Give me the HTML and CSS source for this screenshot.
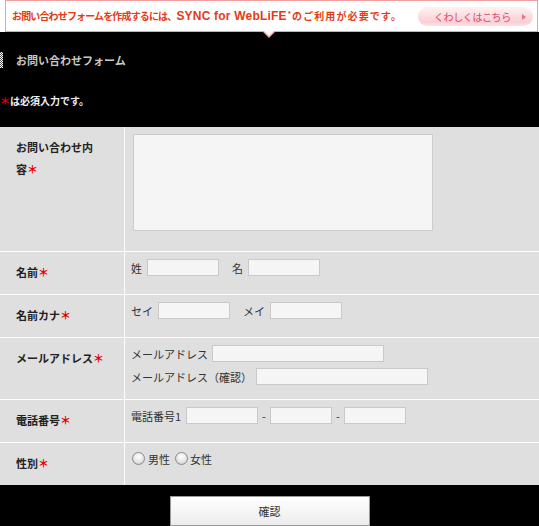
FILE: index.html
```html
<!DOCTYPE html>
<html lang="ja">
<head>
<meta charset="utf-8">
<title>お問い合わせフォーム</title>
<link rel="stylesheet" href="styles.css">
</head>
<body>
<div class="notice">
  <div class="notice-box">
    <p class="notice-text"><span class="nt-lead">お問い合わせフォームを作成するには、</span><strong class="nt-brand">SYNC for WebLiFE<sup>*</sup></strong><span class="nt-tail">のご利用が必要です。</span></p>
    <a class="notice-link" href="#">くわしくはこちら<span class="arrow"></span></a>
  </div>
</div>
<main class="form-area">
  <h1 class="form-title"><span class="mark"></span>お問い合わせフォーム</h1>
  <p class="req-note"><span class="req">＊</span>は必須入力です。</p>
  <form class="contact-form">
    <div class="form-table">
      <div class="label">お問い合わせ内<span class="nw">容<span class="req">＊</span></span></div>
      <div class="field"><textarea class="ta"></textarea></div>

      <div class="label">名前<span class="req">＊</span></div>
      <div class="field">
        <div class="line">姓<input class="text" type="text"><span class="sp">名</span><input class="text" type="text"></div>
      </div>

      <div class="label">名前カナ<span class="req">＊</span></div>
      <div class="field">
        <div class="line">セイ<input class="text" type="text"><span class="sp">メイ</span><input class="text" type="text"></div>
      </div>

      <div class="label">メールアドレス<span class="req">＊</span></div>
      <div class="field">
        <div class="line">メールアドレス<input class="text w172" type="text"></div>
        <div class="line">メールアドレス（確認）<input class="text w172" type="text"></div>
      </div>

      <div class="label">電話番号<span class="req">＊</span></div>
      <div class="field">
        <div class="line">電話番号1<input class="text" type="text"><span class="dash">-</span><input class="text w62 tight" type="text"><span class="dash">-</span><input class="text w62 tight" type="text"></div>
      </div>

      <div class="label">性別<span class="req">＊</span></div>
      <div class="field">
        <div class="line"><input class="radio" type="radio" name="sex">男性<input class="radio r2" type="radio" name="sex">女性</div>
      </div>
    </div>
    <div class="actions"><button class="confirm" type="button">確認</button></div>
  </form>
</main>
</body>
</html>
```

FILE: styles.css
```css
* {
  box-sizing: border-box;
}

html,
body {
  margin: 0;
  padding: 0;
}

body {
  width: 539px;
  height: 526px;
  overflow: hidden;
  background: #000;
  font-family: "Noto Sans CJK JP", "Liberation Sans", sans-serif;
}

/* top notice strip */
.notice {
  height: 32px;
  padding: 0 1px 0 5px;
  background: #fff;
}

.notice-box {
  position: relative;
  height: 32px;
  border: 1px solid #f2a0a0;
  display: flex;
  align-items: center;
  justify-content: space-between;
  padding: 0 4px 0 6px;
}

/* speech-bubble pointer under the strip */
.notice-box::before,
.notice-box::after {
  content: "";
  position: absolute;
  border-style: solid;
  border-color: transparent;
}

.notice-box::before {
  left: 256px;
  top: 30px;
  border-width: 7px 7px 0;
  border-top-color: #f2a0a0;
}

.notice-box::after {
  left: 257px;
  top: 29px;
  border-width: 6px 6px 0;
  border-top-color: #fff;
}

.notice-text {
  margin: 0;
  white-space: nowrap;
  color: #e53a16;
  font-size: 10px;
  font-weight: bold;
  line-height: 14px;
}

.nt-lead {
  letter-spacing: -0.85px;
}

.nt-brand {
  font-family: "Liberation Sans", Arial, sans-serif;
  font-size: 12px;
  letter-spacing: 0.2px;
}

.nt-brand sup {
  font-size: 8px;
  vertical-align: 4px;
  line-height: 0;
  margin-left: 1px;
}

.nt-tail {
  margin-left: 1px;
  letter-spacing: 1.1px;
}

.notice-link {
  display: flex;
  align-items: center;
  width: 115px;
  height: 19px;
  margin-top: 1px;
  padding-left: 16px;
  border-radius: 10px;
  background: linear-gradient(#fff2f3 0%, #fde0e3 40%, #fbcfd4 80%, #fde2e5 100%);
  color: #e2456a;
  font-size: 10px;
  letter-spacing: -0.4px;
  text-decoration: none;
}

.notice-link .arrow {
  margin-left: auto;
  margin-right: 7px;
  border-left: 4px solid #e8738a;
  border-top: 3.5px solid transparent;
  border-bottom: 3.5px solid transparent;
}

/* black form area */
.form-title {
  display: flex;
  align-items: center;
  height: 16px;
  margin: 20px 0 0;
  color: #c8c8c8;
  font-size: 11px;
  font-weight: bold;
  line-height: 16px;
}

.mark {
  width: 3px;
  height: 16px;
  margin-right: 13px;
  background: repeating-conic-gradient(#fff 0 25%, #4a4a4a 0 50%) 0 0 / 2px 2px;
}

.req-note {
  height: 16px;
  margin: 25px 0 0;
  color: #f0f0f0;
  font-size: 10px;
  font-weight: bold;
  line-height: 16px;
}

.req {
  color: #e60000;
}

.form-table {
  display: grid;
  grid-template-columns: 124px 1fr;
  gap: 1px;
  margin-top: 18px;
  background: #fff;
}

.label {
  padding: 9px 16px 11px 16px;
  background: #dfdfdf;
  color: #222;
  font-size: 11px;
  font-weight: bold;
  line-height: 22px;
}

.nw {
  white-space: nowrap;
}

.field {
  display: flex;
  flex-direction: column;
  gap: 6px;
  padding: 7px 8px 14px 6px;
  background: #dfdfdf;
  color: #333;
  font-size: 11px;
}

.line {
  display: flex;
  align-items: center;
  height: 17px;
  white-space: nowrap;
}

.text {
  width: 72px;
  height: 17px;
  margin: 0 0 0 5px;
  padding: 0;
  border: 1px solid #c9c9c9;
  background: #f5f5f5;
}

.text.tight {
  margin-left: 0;
}

.w62 {
  width: 62px;
}

.w172 {
  width: 172px;
  margin-left: 4px;
}

.sp {
  margin-left: 13px;
}

.dash {
  margin: 0 4px;
}

.ta {
  display: block;
  width: 300px;
  height: 97px;
  margin: 0 0 6px 2px;
  border: 1px solid #ccc;
  background: #f5f5f5;
  resize: none;
}

.radio {
  appearance: none;
  -webkit-appearance: none;
  width: 13px;
  height: 13px;
  margin: 0 3px 0 1px;
  border: 1px solid #8a8a8a;
  border-radius: 50%;
  background: radial-gradient(circle at 50% 35%, #fff 0%, #e6e6e6 55%, #b9b9b9 100%);
}

.radio.r2 {
  margin-left: 5px;
  margin-right: 2px;
}

.actions {
  display: flex;
  justify-content: center;
  padding-top: 11px;
}

.confirm {
  width: 200px;
  height: 30px;
  border: 1px solid #9a9a9a;
  border-radius: 0;
  background: linear-gradient(#fff, #ececec);
  color: #333;
  font-family: "Noto Sans CJK JP", "Liberation Sans", sans-serif;
  font-size: 11px;
}
```
